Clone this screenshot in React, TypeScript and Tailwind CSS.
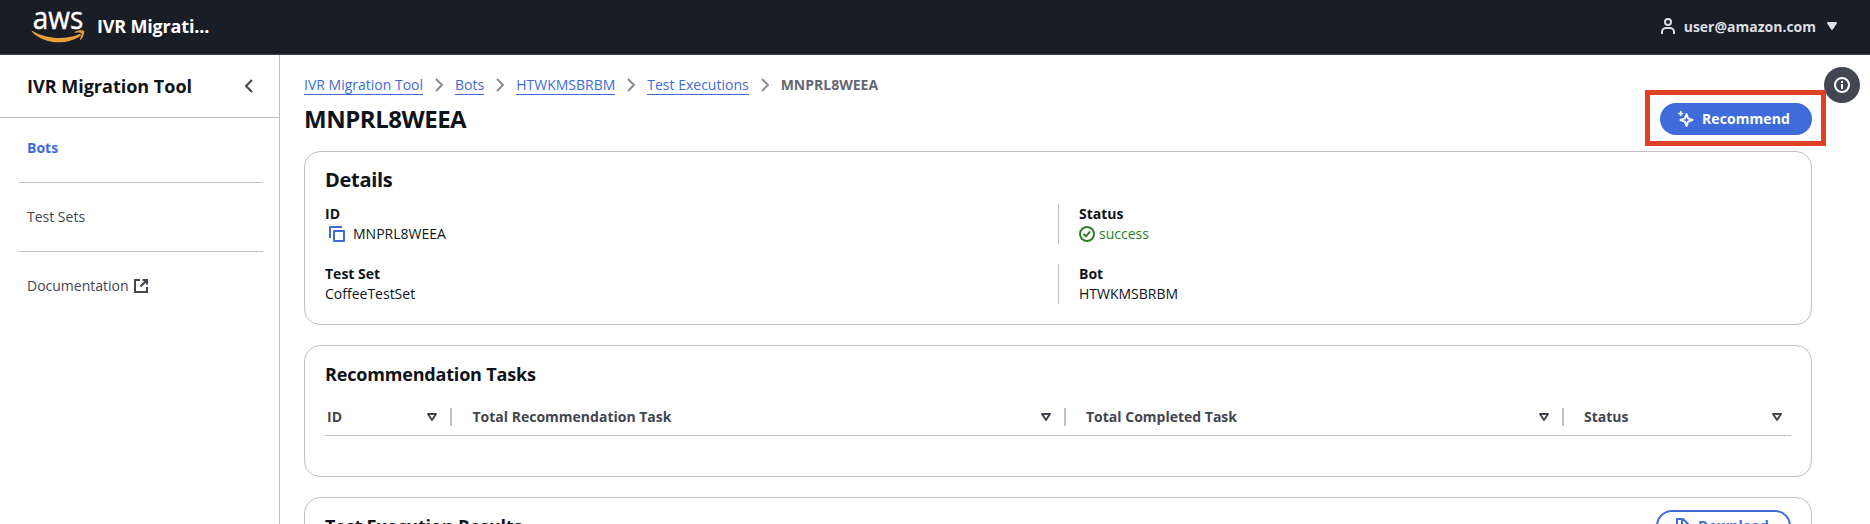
import React from "react";

const link = "border-b border-[#3f6bdb] text-[#3f6bdb] leading-[19px]";

function Chevron() {
  return (
    <svg className="mx-[8px] h-4 w-4 shrink-0" viewBox="0 0 16 16" fill="none" stroke="#8c8c94" strokeWidth="2">
      <path d="M5 2l6 6-6 6" />
    </svg>
  );
}

function AwsLogo() {
  return (
    <div className="flex h-[37px] w-[54px] flex-col items-center">
      <span className="h-[22px] scale-x-[0.9] text-[31px] font-medium leading-[18px] text-white [-webkit-text-stroke:0.4px_white]">aws</span>
      <svg className="h-[13px] w-[54px]" viewBox="0 0 54 13">
        <path d="M1 1.2C0.2 0.3 1.2-0.2 2 0.4C15 8 34 9.5 48 3.4C49.6 2.7 50.8 4 49.2 5.2C36 14.5 14 14 1 1.2Z" fill="#eb9d38" transform="translate(0 .8)" />
        <path d="M43.6 1.9C46 .2 52.2 -.3 53 .9C53.7 2 52.600 7 50 9.600C49.400 10.200 48.700 9.900 49 9.200C49.800 7.300 51 4 50.500 3.200C49.900 2.300 46.500 2.400 44.300 2.700C43.500 2.800 43.100 2.300 43.600 1.900Z" fill="#eb9d38" />
      </svg>
    </div>
  );
}

function TopBar() {
  return (
    <header className="flex h-[55px] shrink-0 items-center justify-between border-b border-[#424650] bg-[#191d26] pl-[31px] pr-[30px] pb-[2px]">
      <div className="flex items-center">
        <AwsLogo />
        <span className="ml-[12px] text-[18px] font-bold tracking-[-0.18px] text-white">IVR Migrati...</span>
      </div>
      <div className="flex items-center text-[#dedee3]">
        <svg className="h-4 w-4" viewBox="0 0 16 16" fill="none" stroke="currentColor" strokeWidth="2">
          <circle cx="8" cy="4" r="3" />
          <path d="M2 16v-2a4 4 0 0 1 4-4h4a4 4 0 0 1 4 4v2" />
        </svg>
        <span className="ml-[8px] text-[14px] font-bold">user@amazon.com</span>
        <svg className="ml-[8px] h-4 w-4" viewBox="0 0 16 16">
          <path d="M4 5h8l-4 6z" fill="currentColor" stroke="currentColor" strokeWidth="2" strokeLinejoin="round" />
        </svg>
      </div>
    </header>
  );
}

function Sidebar() {
  return (
    <nav className="flex w-[280px] shrink-0 flex-col border-r border-[#c0c0c4] text-[#424650]">
      <div className="flex h-[63px] items-center justify-between border-b border-[#c0c0c4] pl-[27px] pr-[22px]">
        <h2 className="text-[18px] font-bold text-[#0f141a]">IVR Migration Tool</h2>
        <svg className="h-4 w-4" viewBox="0 0 16 16" fill="none" stroke="#424650" strokeWidth="2">
          <path d="M11 2L5 8l6 6" />
        </svg>
      </div>
      <ul className="ml-[19px] mr-[16px] flex flex-col">
        <li className="flex h-[65px] items-center border-b border-[#c0c0c8] pl-[8px] pb-[5px] text-[14px] font-bold text-[#3f6bdb]">Bots</li>
        <li className="flex h-[69px] items-center border-b border-[#c0c0c8] pl-[8px] pb-[2px] text-[14px]">Test Sets</li>
        <li className="flex h-[69px] items-center pl-[8px] pb-[2px] text-[14px]">
          Documentation
          <svg className="ml-[4px] h-4 w-4" viewBox="0 0 16 16" fill="none" stroke="currentColor" strokeWidth="2">
            <path d="M7 2H2v12h12V9M9.500 2H14v4.500M14 2L7.500 8.500" />
          </svg>
        </li>
      </ul>
    </nav>
  );
}

function Field({ label, children }: { label: string; children: React.ReactNode }) {
  return (
    <div className="flex h-10 flex-col text-[14px] leading-5">
      <div className="font-bold">{label}</div>
      <div className="flex items-center">{children}</div>
    </div>
  );
}

function HeaderCell({ label, width, pad, last }: { label: string; width: string; pad: string; last?: boolean }) {
  return (
    <div className={`flex h-[18px] shrink-0 items-center justify-between ${width} ${pad} ${last ? "pr-[6px]" : "border-r-2 border-[#c0c0c8] pr-[10px]"}`}>
      <span>{label}</span>
      <svg className="h-4 w-4" viewBox="0 0 16 16" fill="none" stroke="currentColor" strokeWidth="2" strokeLinejoin="round">
        <path d="M4 5h8l-4 6z" />
      </svg>
    </div>
  );
}

const card = "flex shrink-0 flex-col rounded-2xl border border-[#c0c0c8] px-[20px]";

export default function App() {
  return (
    <div className="relative flex h-[524px] w-[1870px] flex-col overflow-hidden bg-white font-['Open_Sans',sans-serif] text-[#0f141a]">
      <TopBar />
      <div className="flex min-h-0 flex-1">
        <Sidebar />
        <main className="flex w-[1532px] flex-col pl-[24px] pt-[20px]">
          <div className="flex h-5 items-center text-[14px]">
            <a className={link}>IVR Migration Tool</a>
            <Chevron />
            <a className={link}>Bots</a>
            <Chevron />
            <a className={link}>HTWKMSBRBM</a>
            <Chevron />
            <a className={link}>Test Executions</a>
            <Chevron />
            <span className="pb-px font-bold leading-[19px] text-[#656871]">MNPRL8WEEA</span>
          </div>
          <div className="mt-[8px] flex h-8 items-center justify-between">
            <h1 className="text-[24px] font-bold leading-[30px] tracking-[-0.48px]">MNPRL8WEEA</h1>
            <button className="flex h-8 w-[152px] items-center rounded-full bg-[#3f6bdb] pl-[18px] text-[14px] font-bold tracking-[0.07px] text-white">
              <svg className="h-4 w-4" viewBox="0 0 16 16" fill="none" stroke="currentColor">
                <path strokeWidth="2" strokeLinejoin="round" d="M8.500 3l1.600 4.400L14.500 9l-4.400 1.600L8.500 15l-1.600-4.400L2.500 9l4.400-1.600z" />
                <path strokeWidth="1.600" d="M2.700 0v5M.2 2.500h5" />
              </svg>
              <span className="ml-[8px] pb-[2px]">Recommend</span>
            </button>
          </div>

          <section className={`${card} mt-[16px] h-[174px]`}>
            <h2 className="mt-[16px] h-6 text-[20px] font-bold leading-6 tracking-[-0.3px]">Details</h2>
            <div className="mt-[12px] flex flex-col gap-5">
              <div className="flex">
                <div className="w-[733px]">
                  <Field label="ID">
                    <svg className="ml-[4px] mr-[8px] h-4 w-4" viewBox="0 0 16 16" fill="none" stroke="#3f6bdb" strokeWidth="2" strokeLinejoin="round">
                      <path d="M1 12V1h12M5 5h10v10H5z" />
                    </svg>
                    MNPRL8WEEA
                  </Field>
                </div>
                <div className="border-l border-[#c0c0c8] pl-[20px]">
                  <Field label="Status">
                    <svg className="mr-[4px] h-4 w-4" viewBox="0 0 16 16" fill="none" stroke="#2b7f2b" strokeWidth="2">
                      <circle cx="8" cy="8" r="7" />
                      <path d="M4.500 8l2.500 2.300 4-4.800" />
                    </svg>
                    <span className="text-[#2b7f2b]">success</span>
                  </Field>
                </div>
              </div>
              <div className="flex">
                <div className="w-[733px]">
                  <Field label="Test Set">CoffeeTestSet</Field>
                </div>
                <div className="border-l border-[#c0c0c8] pl-[20px]">
                  <Field label="Bot">HTWKMSBRBM</Field>
                </div>
              </div>
            </div>
          </section>

          <section className={`${card} mt-[20px] h-[132px]`}>
            <h2 className="mt-[17px] h-[22px] text-[18px] font-bold leading-[22px] tracking-[-0.18px]">Recommendation Tasks</h2>
            <div className="mt-[13px] flex h-[38px] items-center border-b border-[#c0c0c8] text-[14px] font-bold text-[#424650]">
              <HeaderCell label="ID" width="w-[127px]" pad="pl-[2px]" />
              <HeaderCell label="Total Recommendation Task" width="w-[614px]" pad="pl-[20.5px]" />
              <HeaderCell label="Total Completed Task" width="w-[498px]" pad="pl-[20px]" />
              <HeaderCell label="Status" width="w-[227px]" pad="pl-[20px]" last />
            </div>
          </section>

          <section className={`${card} mt-[20px] h-[132px]`}>
            <div className="mt-[12px] flex items-start justify-between">
              <h2 className="mt-[5px] text-[18px] font-bold leading-[22px] tracking-[-0.18px]">Test Execution Results</h2>
              <button className="flex h-8 w-[135px] items-center rounded-full border-2 border-[#3f6bdb] pl-[16px] text-[14px] font-bold tracking-[0.07px] text-[#3f6bdb]">
                <svg className="h-4 w-4" viewBox="0 0 16 16" fill="none" stroke="currentColor" strokeWidth="2" strokeLinejoin="round">
                  <path d="M3 1h6l5 5v9H3zM8 1v6h6" />
                </svg>
                <span className="ml-[8px] pb-[1px]">Download</span>
              </button>
            </div>
          </section>
        </main>
      </div>
      <div className="absolute left-[1824px] top-[67px] flex h-9 w-9 items-center justify-center rounded-full bg-[#424650]">
        <svg className="h-4 w-4" viewBox="0 0 16 16" fill="none" stroke="white" strokeWidth="2">
          <circle cx="8" cy="8" r="7" />
          <path d="M8 7v5M8 4v2" />
        </svg>
      </div>
      <div className="absolute left-[1645px] top-[90px] h-[56px] w-[181px] border-[5px] border-[#df4126]" />
    </div>
  );
}
